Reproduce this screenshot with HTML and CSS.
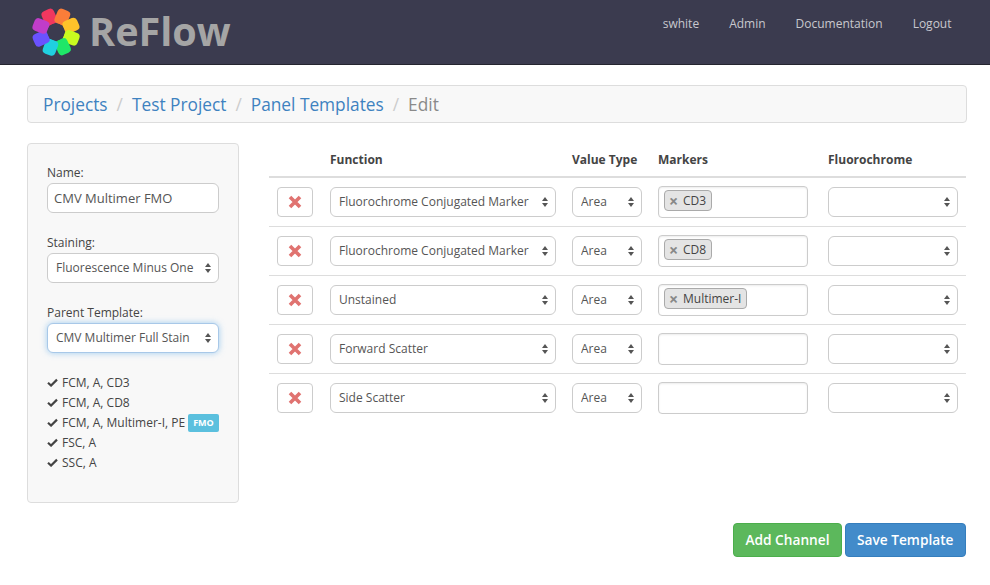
FILE: index.html
```html
<!DOCTYPE html>
<html lang="en">
<head>
    <meta charset="UTF-8">
    <title>ReFlow</title>
    <link rel="stylesheet" href="styles.css">
</head>
<body>
    <header class="navbar">
        <a class="brand" href="#">
            <svg class="logo" width="50" height="50" viewBox="-25 -25 50 50">
                <rect x="-6.6" y="-24" width="13.2" height="15.5" rx="4" fill="#f0375f" transform="rotate(-24)"/>
                <rect x="-6.6" y="-24" width="13.2" height="15.5" rx="4" fill="#fb7d39" transform="rotate(23)"/>
                <rect x="-6.6" y="-24" width="13.2" height="15.5" rx="4" fill="#ffc22a" transform="rotate(67)"/>
                <rect x="-6.6" y="-24" width="13.2" height="15.5" rx="4" fill="#c9fb1f" transform="rotate(111)"/>
                <rect x="-6.6" y="-24" width="13.2" height="15.5" rx="4" fill="#1fe768" transform="rotate(155)"/>
                <rect x="-6.6" y="-24" width="13.2" height="15.5" rx="4" fill="#20d0e0" transform="rotate(200)"/>
                <rect x="-6.6" y="-24" width="13.2" height="15.5" rx="4" fill="#6a52ff" transform="rotate(246)"/>
                <rect x="-6.6" y="-24" width="13.2" height="15.5" rx="4" fill="#c03dc9" transform="rotate(292)"/>
                <circle r="8.5" fill="#3b3b4f"/>
            </svg>
            <span class="brand-name">ReFlow</span>
        </a>
        <nav class="nav-links">
            <a href="#">swhite</a>
            <a href="#">Admin</a>
            <a href="#">Documentation</a>
            <a href="#">Logout</a>
        </nav>
    </header>

    <main class="page">
        <ol class="breadcrumb">
            <li><a href="#">Projects</a></li>
            <li><a href="#">Test Project</a></li>
            <li><a href="#">Panel Templates</a></li>
            <li class="active">Edit</li>
        </ol>

        <div class="content">
            <aside class="side-panel">
                <label class="field">Name:
                    <input class="control name-input" type="text" value="CMV Multimer FMO">
                </label>
                <label class="field">Staining:
                    <select class="control"><option>Fluorescence Minus One</option></select>
                </label>
                <label class="field">Parent Template:
                    <select class="control focused"><option>CMV Multimer Full Stain</option></select>
                </label>
                <ul class="checklist">
                    <li><svg class="check" viewBox="0 0 12 10"><path d="M1 5.2 L4.4 8.4 L11 1.8" /></svg>FCM, A, CD3</li>
                    <li><svg class="check" viewBox="0 0 12 10"><path d="M1 5.2 L4.4 8.4 L11 1.8" /></svg>FCM, A, CD8</li>
                    <li><svg class="check" viewBox="0 0 12 10"><path d="M1 5.2 L4.4 8.4 L11 1.8" /></svg>FCM, A, Multimer-I, PE <span class="tag">FMO</span></li>
                    <li><svg class="check" viewBox="0 0 12 10"><path d="M1 5.2 L4.4 8.4 L11 1.8" /></svg>FSC, A</li>
                    <li><svg class="check" viewBox="0 0 12 10"><path d="M1 5.2 L4.4 8.4 L11 1.8" /></svg>SSC, A</li>
                </ul>
            </aside>

            <section class="channels">
                <div class="row head">
                    <span></span>
                    <span>Function</span>
                    <span>Value Type</span>
                    <span>Markers</span>
                    <span>Fluorochrome</span>
                </div>

                <div class="row">
                    <button class="del"><svg viewBox="0 0 14 14"><path d="M2 2 L12 12 M12 2 L2 12"/></svg></button>
                    <select class="control"><option>Fluorochrome Conjugated Marker</option></select>
                    <select class="control"><option>Area</option></select>
                    <div class="markers"><span class="chip"><i>×</i>CD3</span></div>
                    <select class="control"><option></option></select>
                </div>
                <div class="row">
                    <button class="del"><svg viewBox="0 0 14 14"><path d="M2 2 L12 12 M12 2 L2 12"/></svg></button>
                    <select class="control"><option>Fluorochrome Conjugated Marker</option></select>
                    <select class="control"><option>Area</option></select>
                    <div class="markers"><span class="chip"><i>×</i>CD8</span></div>
                    <select class="control"><option></option></select>
                </div>
                <div class="row">
                    <button class="del"><svg viewBox="0 0 14 14"><path d="M2 2 L12 12 M12 2 L2 12"/></svg></button>
                    <select class="control"><option>Unstained</option></select>
                    <select class="control"><option>Area</option></select>
                    <div class="markers"><span class="chip"><i>×</i>Multimer-I</span></div>
                    <select class="control"><option></option></select>
                </div>
                <div class="row">
                    <button class="del"><svg viewBox="0 0 14 14"><path d="M2 2 L12 12 M12 2 L2 12"/></svg></button>
                    <select class="control"><option>Forward Scatter</option></select>
                    <select class="control"><option>Area</option></select>
                    <div class="markers"></div>
                    <select class="control"><option></option></select>
                </div>
                <div class="row">
                    <button class="del"><svg viewBox="0 0 14 14"><path d="M2 2 L12 12 M12 2 L2 12"/></svg></button>
                    <select class="control"><option>Side Scatter</option></select>
                    <select class="control"><option>Area</option></select>
                    <div class="markers"></div>
                    <select class="control"><option></option></select>
                </div>
            </section>
        </div>

        <div class="actions">
            <button class="btn btn-green">Add Channel</button>
            <button class="btn btn-blue">Save Template</button>
        </div>
    </main>
</body>
</html>
```

FILE: styles.css
```css
* {
    box-sizing: border-box;
}
body {
    margin: 0;
    font-family: 'Open Sans', sans-serif;
    font-size: 12px;
    color: #444;
    background: #fff;
}
a {
    text-decoration: none;
}

.navbar {
    height: 65px;
    display: flex;
    justify-content: space-between;
    background: #3b3b4f;
    border-bottom: 1px solid #25252f;
}
.brand {
    display: flex;
    align-items: center;
    margin-left: 31px;
    height: 64px;
}
.logo {
    display: block;
}
.brand-name {
    margin: -3px 0 0 8px;
    font-size: 39.6px;
    font-weight: 700;
    color: #a5a5a5;
}
.nav-links {
    display: flex;
    gap: 30px;
    margin: 17px 38.5px 0 0;
}
.nav-links a {
    font-size: 12px;
    line-height: 14px;
    color: #c8c8ce;
}

.page {
    padding: 20px 23px 0 27px;
}
.breadcrumb {
    display: flex;
    height: 38px;
    margin: 0;
    padding: 0 15px;
    align-items: center;
    list-style: none;
    background: #f8f8f8;
    border: 1px solid #ddd;
    border-radius: 4px;
    font-size: 17.3px;
}
.breadcrumb li + li::before {
    content: "/";
    padding: 0 9px;
    color: #ccc;
}
.breadcrumb a {
    color: #3e82c0;
}
.breadcrumb .active {
    color: #8a8a8a;
}

.content {
    display: flex;
    margin-top: 20px;
}
.side-panel {
    flex: none;
    width: 212px;
    height: 360px;
    margin-right: 30px;
    padding: 19px 19px 0;
    background: #f8f8f8;
    border: 1px solid #ddd;
    border-radius: 4px;
}
.field {
    display: block;
    margin-bottom: 19px;
    line-height: 19px;
}
.field + .field {
    margin-top: 20px;
}
.field .control {
    display: block;
    width: 100%;
    margin-top: 1px;
}
.control {
    height: 30px;
    padding: 0 24px 2px 8px;
    font: 12px 'Open Sans', sans-serif;
    color: #555;
    background: #fff url("data:image/svg+xml,%3Csvg xmlns='http://www.w3.org/2000/svg' width='6' height='10'%3E%3Cpath d='M3 0 L6 4 H0 Z M3 10 L0 6 H6 Z' fill='%23555'/%3E%3C/svg%3E") no-repeat right 7px center;
    border: 1px solid #ccc;
    border-radius: 6px;
    appearance: none;
}
.name-input {
    padding: 0 6px 1px;
    font-size: 13px;
    background-image: none;
}
.focused {
    border-color: #a8c8e8;
    box-shadow: 0 0 6px rgba(102, 175, 233, 0.6);
}

.checklist {
    margin: 0;
    padding: 0;
    list-style: none;
}
.checklist li {
    display: flex;
    align-items: center;
    height: 20px;
    white-space: nowrap;
}
.check {
    width: 11px;
    height: 9px;
    margin-right: 4px;
    fill: none;
    stroke: #444;
    stroke-width: 2.4;
}
.tag {
    margin: 2px 0 0 3px;
    padding: 0 5px;
    font-size: 9px;
    font-weight: 700;
    line-height: 18px;
    color: #fff;
    background: #5bc0de;
    border-radius: 2px;
}

.channels {
    flex: 1;
    margin-right: 1px;
}
.row {
    display: grid;
    grid-template-columns: 37px 226px 70px 154px 130px;
    column-gap: 16px;
    align-items: center;
    height: 49px;
    padding-left: 8px;
    border-bottom: 1px solid #ddd;
}
.row.head {
    height: 35px;
    padding-bottom: 1px;
    font-weight: 700;
    border-bottom: 2px solid #ddd;
}
.row.head > span {
    align-self: start;
    padding-top: 8px;
    line-height: 17px;
}
.row:last-child {
    border-bottom-color: transparent;
}
.del {
    width: 36px;
    height: 30px;
    padding: 0;
    background: #fff;
    border: 1px solid #ccc;
    border-radius: 4px;
}
.del svg {
    display: block;
    width: 14px;
    height: 14px;
    margin: auto;
    fill: none;
    stroke: #e07370;
    stroke-width: 3.6;
}
.markers {
    height: 32px;
    margin-right: 4px;
    padding: 3px 5px;
    background: #fff;
    border: 1px solid #ccc;
    border-radius: 4px;
    box-shadow: inset 0 1px 2px rgba(0, 0, 0, 0.08);
}
.chip {
    display: inline-block;
    height: 21px;
    padding: 0 5px 0 4px;
    line-height: 19px;
    color: #444;
    background: #e4e4e4;
    border: 1px solid #aaa;
    border-radius: 4px;
}
.chip i {
    display: inline-block;
    width: 9px;
    margin-right: 5px;
    font-size: 16px;
    font-style: normal;
    font-weight: 700;
    line-height: 14px;
    color: #888;
    vertical-align: -2px;
}

.actions {
    display: flex;
    justify-content: flex-end;
    gap: 3px;
    margin: 20px 1px 0 0;
}
.btn {
    height: 34px;
    padding: 0 11.5px 1px;
    font: 600 13.7px 'Open Sans', sans-serif;
    color: #fff;
    border: 1px solid transparent;
    border-radius: 4px;
}
.btn-green {
    padding: 0 11px 1px;
    background: #5cb85c;
    border-color: #4cae4c;
}
.btn-blue {
    background: #428bca;
    border-color: #357ebd;
}
```
